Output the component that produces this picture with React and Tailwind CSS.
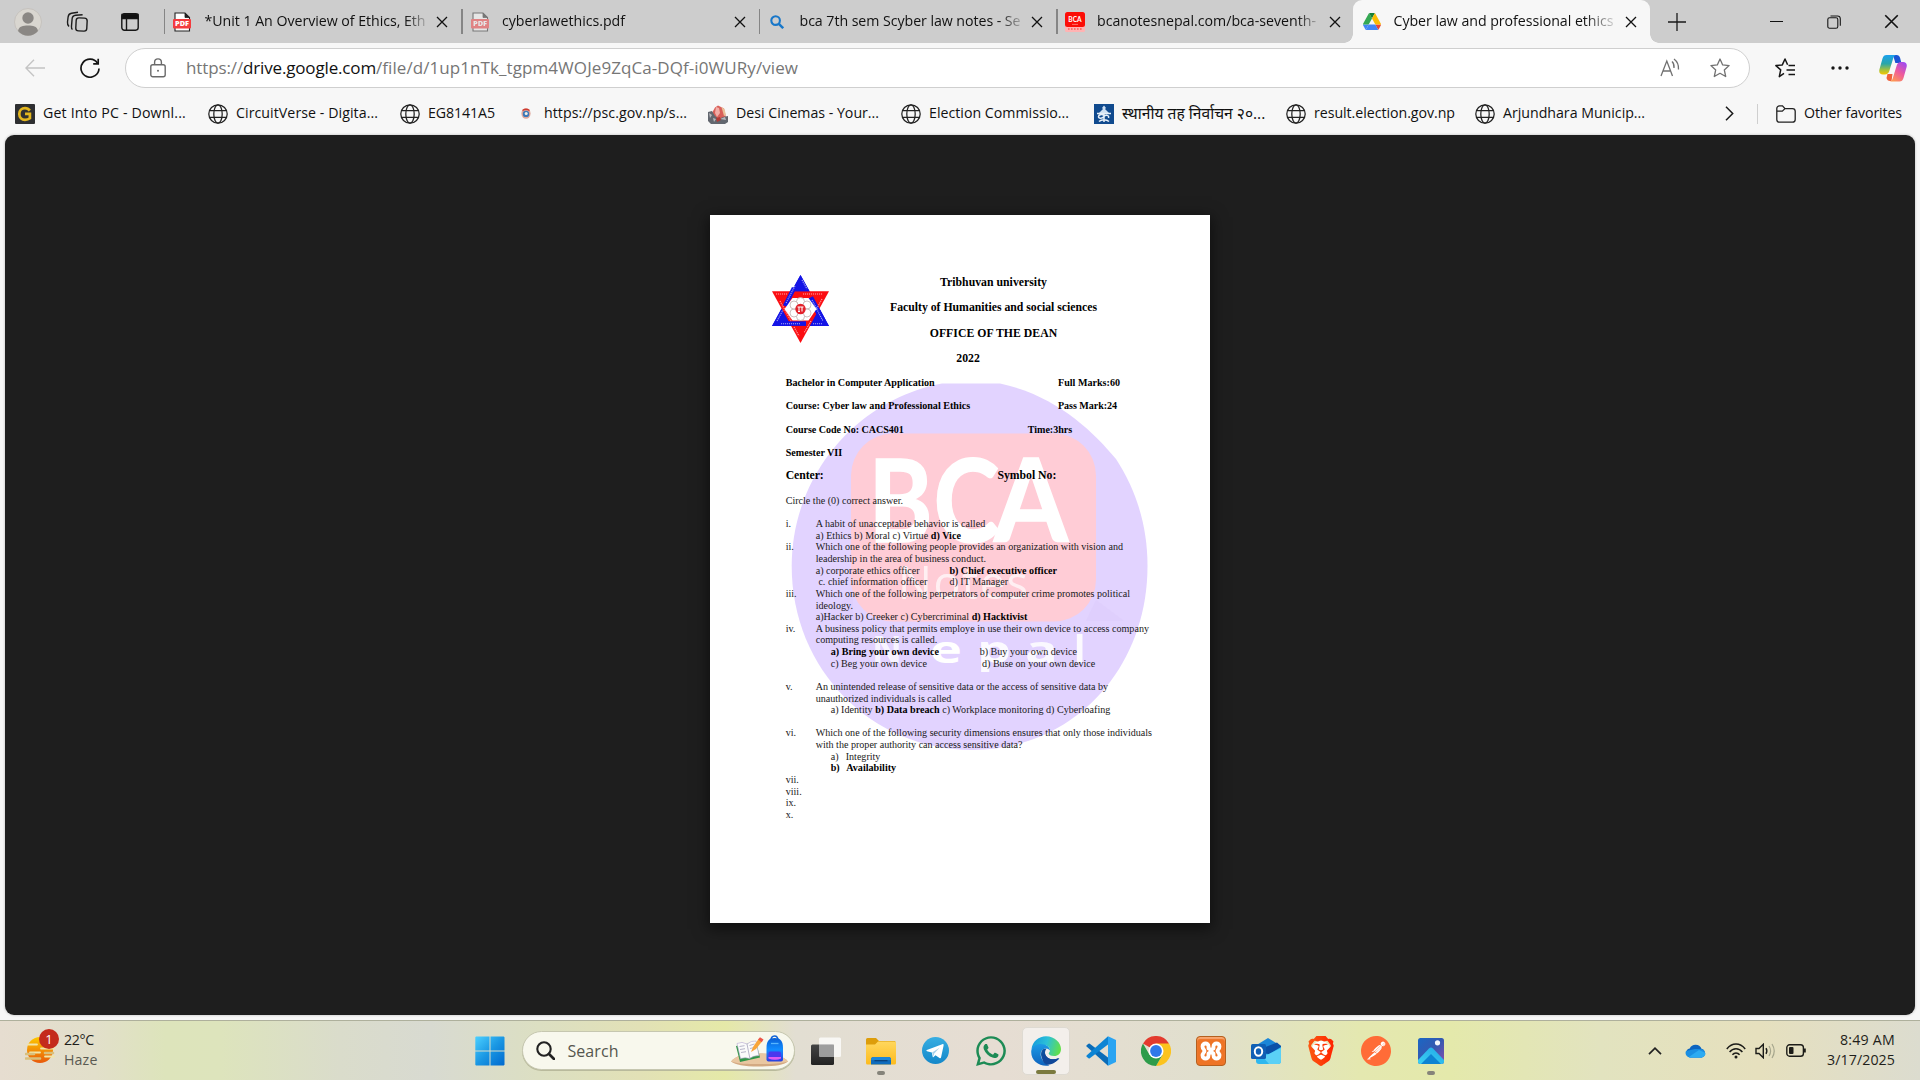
import React, { useLayoutEffect, useRef } from "react";
import { FaWhatsapp } from "react-icons/fa";
import { SiBrave, SiPostman } from "react-icons/si";

/* One line of text whose tracking is adjusted so that it fills a given width. */
function Fit({ w, className = "", children }) {
  const ref = useRef(null);
  useLayoutEffect(() => {
    const el = ref.current;
    const run = () => {
      el.style.letterSpacing = "0px";
      const natural = el.getBoundingClientRect().width;
      const n = el.textContent.length;
      if (w && n) el.style.letterSpacing = `${(w - natural) / n}px`;
    };
    run();
    document.fonts.ready.then(run);
  }, [w]);
  return (
    <span ref={ref} className={`inline-block whitespace-pre ${className}`}>
      {children}
    </span>
  );
}

/* ---------- small icons ---------- */
const Close = ({ className = "size-3" }) => (
  <svg viewBox="0 0 12 12" className={className} fill="none" stroke="#111" strokeWidth="1.3">
    <path d="M1 1l10 10M11 1L1 11" />
  </svg>
);

const Pdf = ({ faded }) => (
  <svg viewBox="0 0 18 20" className={faded ? "h-5 w-[18px] opacity-50" : "h-5 w-[18px]"}>
    <path d="M2 1h10l4.500 4.500V19H2z" fill="#fff" stroke="#222" strokeWidth="1.1" />
    <path d="M12 1v4.500h4.500z" fill="#222" stroke="#222" strokeWidth=".8" />
    <rect x="0" y="7" width="18" height="9.5" rx="1" fill="#f43b3e" />
    <text x="9" y="14.4" textAnchor="middle" fontSize="7" fontWeight="800" fontFamily="Open Sans, sans-serif" fill="#fff" textLength="14" lengthAdjust="spacingAndGlyphs">PDF</text>
  </svg>
);

const BingSearch = () => (
  <svg viewBox="0 0 14 14" className="size-3.5" fill="none" stroke="#1877c9" strokeWidth="2.1">
    <circle cx="5.6" cy="5.6" r="4.3" />
    <path d="M8.800 8.800l4.400 4.400" strokeWidth="2.4" />
  </svg>
);

const BcaIcon = () => (
  <svg viewBox="0 0 20 20" className="size-5">
    <rect width="20" height="20" rx="1.5" fill="#ffb3b3" />
    <rect width="20" height="15" rx="2.5" fill="#fb0d06" />
    <text x="10" y="10" textAnchor="middle" fontSize="6.6" fontWeight="700" fontFamily="Lato, sans-serif" fill="#fff">BCA</text>
    <path d="M7 12.400h6" stroke="#ff8a80" strokeWidth=".8" />
    <path d="M3 17h14" stroke="#ff5d55" strokeWidth="1.4" strokeDasharray="1.6 1.4" />
  </svg>
);

const Drive = () => (
  <svg viewBox="0 0 87.3 78" className="h-[17px] w-[18px]" preserveAspectRatio="none">
    <path d="m6.6 66.85 3.85 6.65c.8 1.4 1.95 2.5 3.3 3.3l13.75-23.8h-27.5c0 1.55.4 3.1 1.2 4.5z" fill="#4285f4" />
    <path d="m43.65 25-13.75-23.8c-1.35.8-2.5 1.9-3.3 3.3l-25.4 44a9.06 9.06 0 0 0 -1.2 4.5h27.5z" fill="#34a853" />
    <path d="m73.55 76.8c1.35-.8 2.5-1.9 3.3-3.3l1.6-2.75 7.65-13.25c.8-1.4 1.2-2.95 1.2-4.5h-27.502l5.852 11.5z" fill="#ea4335" />
    <path d="m43.65 25 13.75-23.8c-1.35-.8-2.9-1.2-4.5-1.2h-18.5c-1.6 0-3.15.45-4.5 1.2z" fill="#188038" />
    <path d="m59.8 53h-32.3l-13.75 23.8c1.35.8 2.9 1.2 4.5 1.2h50.8c1.6 0 3.15-.45 4.5-1.2z" fill="#4285f4" />
    <path d="m73.4 26.5-12.7-22c-.8-1.4-1.95-2.5-3.3-3.3l-13.75 23.8 16.15 28h27.45c0-1.55-.4-3.1-1.2-4.5z" fill="#fbbc04" />
  </svg>
);

const Globe = () => (
  <svg viewBox="0 0 20 20" className="size-5" fill="none" stroke="#222" strokeWidth="1.25">
    <circle cx="10" cy="10" r="9.2" />
    <ellipse cx="10" cy="10" rx="4.2" ry="9.2" />
    <path d="M1.600 6.600h16.800M1.600 13.400h16.800" />
  </svg>
);

const GetInto = () => (
  <svg viewBox="0 0 20 20" className="size-5">
    <rect width="20" height="20" rx="1" fill="#2e2f31" />
    <path d="M14.800 6.600C13.600 4.900 11.900 4.200 10 4.200C6.800 4.200 4.300 6.500 4.300 10s2.500 5.800 5.700 5.800c1.900 0 3.600-.5 4.900-1.500V9.800H10" fill="none" stroke="#e3b61f" strokeWidth="2.7" />
  </svg>
);

const Psc = () => (
  <span className="flex size-5 items-center justify-center">
    <svg viewBox="0 0 10 11" className="h-[11px] w-2.5">
      <ellipse cx="5" cy="5.5" rx="4.6" ry="5.2" fill="#e0a79b" />
      <circle cx="5" cy="5.9" r="3.2" fill="#3d79b8" />
      <circle cx="5.2" cy="5.4" r="1.5" fill="#f3efe6" />
      <path d="M1.500 2.500Q5 0 8.500 2.500" stroke="#cf3b30" strokeWidth="1.4" fill="none" />
    </svg>
  </span>
);

const Desi = () => (
  <svg viewBox="0 0 20 20" className="size-5">
    <path d="M4 9L7 3.500l3-2 2 1 4 2 2 9.500-3 2H6z" fill="#d9605a" />
    <path d="M8 3l3 1 1 5-3 4-2-4z" fill="#f2aca6" />
    <path d="M13.500 3l3 2 1.500 6-2 1z" fill="#e9c29a" />
    <path d="M0 8l4-1 3 5 4 3 4-2 5-1v6l-3 2H3l-3-3z" fill="#62676f" />
    <path d="M1 9l3 2-2 3zM12 15l5-2 1 3zM5 14l3 1-2 3z" fill="#b9b9bd" />
    <path d="M8 14l4-1 1 3-4 2z" fill="#b13a36" />
  </svg>
);

const Nepali = () => (
  <svg viewBox="0 0 20 20" className="size-5">
    <rect width="20" height="20" fill="#104a8e" />
    <path d="M10 1.500l2 2.500-1 1 4 4H5l4-4-1-1z" fill="#cfe0f2" />
    <path d="M3 9.500h14M10 9v9M10 11.500c-2-1.500-5.500-1-5.500 1s3.500 2.500 5.500 0c1.500-2 5.500-1.500 4.500 1.500M5 17.500c2.500-2.500 7.500-2.500 10 0" fill="none" stroke="#e6eff8" strokeWidth="1.5" />
  </svg>
);

/* ---------- browser chrome ---------- */
function Tab({ icon, title, w, iconPad }) {
  return (
    <div className="flex h-[43px] w-[297.5px] shrink-0 items-center">
      <div className="h-[25px] w-[1.5px] bg-[#858585]" />
      <div className={`flex w-[39.5px] ${iconPad}`}>{icon}</div>
      <div className="-mt-px w-[221px] text-[14.2px] leading-5 [mask-image:linear-gradient(to_right,#000_200px,transparent_226px)]">
        <Fit w={w}>{title}</Fit>
      </div>
      <div className="flex grow justify-end pr-[13px]">
        <Close />
      </div>
    </div>
  );
}

function TabStrip() {
  return (
    <div className="flex h-[43px] bg-[#cdcdcd]">
      <div className="flex w-[163.5px] shrink-0 items-center pl-3.5">
        <svg viewBox="0 0 28 28" className="size-7">
          <circle cx="14" cy="14" r="13.5" fill="#d9d6d0" stroke="#c1beb9" strokeWidth=".8" />
          <circle cx="14" cy="10" r="5.7" fill="#8a8784" />
          <path d="M4 23c1-5 5-5.500 10-5.500s9 .5 10 5.500a13 13 0 0 1-20 0z" fill="#8a8784" />
        </svg>
        <svg viewBox="0 0 22 22" className="ml-6 size-[22px]" fill="none" stroke="#1c1c1c" strokeWidth="1.4">
          <rect x="10" y="7" width="11" height="13" rx="2.8" transform="rotate(3 15 13)" />
          <path d="M6.500 18.500C5 17.500 5.500 16 5.500 15l.6-7c.2-2.500 1.200-3.600 3.500-3.800l7-.5" />
          <path d="M3 15.500C1.500 14 1.300 13 1.500 11l.6-5C2.400 3.500 3.500 2.500 5.500 2.200L12 1.200" />
        </svg>
        <svg viewBox="0 0 18 18" className="ml-[33px] size-[18px]" fill="none" stroke="#161616" strokeWidth="1.4">
          <rect x=".8" y=".8" width="16.4" height="16.4" rx="2.6" />
          <path d="M1 1.500h16v4H1z" fill="#111" />
          <path d="M5.500 5v12" />
        </svg>
      </div>
      <Tab icon={<Pdf />} iconPad="pl-2" w={221} title="*Unit 1 An Overview of Ethics, Eth" />
      <Tab icon={<Pdf faded />} iconPad="pl-2" w={123} title="cyberlawethics.pdf" />
      <Tab icon={<BingSearch />} iconPad="pl-2.5" w={221} title="bca 7th sem Scyber law notes - Se" />
      <Tab icon={<BcaIcon />} iconPad="pl-[7px]" w={219} title="bcanotesnepal.com/bca-seventh-" />
      <div className="relative -ml-px flex h-[43px] w-[297px] items-center rounded-t-[9px] bg-[#f7f7f7] pl-[10px]">
        <div className="absolute bottom-0 -left-[9px] size-[9px] bg-[radial-gradient(circle_at_0_0,#cdcdcd_8.5px,#f7f7f7_9px)]" />
        <div className="absolute -right-[9px] bottom-0 size-[9px] bg-[radial-gradient(circle_at_100%_0,#cdcdcd_8.5px,#f7f7f7_9px)]" />
        <div className="w-[31px]"><Drive /></div>
        <div className="-mt-px w-[221px] text-[14.2px] leading-5 [mask-image:linear-gradient(to_right,#000_190px,transparent_226px)]">
          <Fit w={220}>Cyber law and professional ethics</Fit>
        </div>
        <div className="flex grow justify-end pr-[13px]"><Close /></div>
      </div>
      <div className="flex grow items-center pl-[18px]">
        <svg viewBox="0 0 18 18" className="size-[18px]" stroke="#1a1a1a" strokeWidth="1.3"><path d="M9 0v18M0 9h18" /></svg>
        <div className="flex grow items-center justify-end pr-[21px]">
          <div className="h-px w-[13px] bg-[#111]" />
          <svg viewBox="0 0 14 14" className="ml-[44px] size-[14px]" fill="none" stroke="#161616" strokeWidth="1.1">
            <rect x=".8" y="2.8" width="10" height="10.4" rx="1.8" />
            <path d="M3.500 1h7c1.800 0 2.800 1 2.800 2.800v7" />
          </svg>
          <Close className="ml-[43px] size-[15px]" />
        </div>
      </div>
    </div>
  );
}

function Toolbar() {
  return (
    <div className="flex h-[49px] items-center bg-[#f7f7f7] pl-[25px]">
      <svg viewBox="0 0 20 18" className="h-[18px] w-5" fill="none" stroke="#c4c4c4" strokeWidth="1.4"><path d="M9 .8L.9 9 9 17.200M1 9h19" /></svg>
      <svg viewBox="0 0 20 20" className="ml-[35px] size-5" fill="none" stroke="#141414" strokeWidth="1.7">
        <path d="M17.500 5.200A9 9 0 1 0 19 10.500" /><path d="M18.200.8v5h-5" />
      </svg>
      <div className="ml-[25px] flex h-[40px] w-[1625px] items-center rounded-full border border-[#cfcfcf] bg-white pl-6">
        <svg viewBox="0 0 16 20" className="h-5 w-4" fill="none" stroke="#6a6a6a" strokeWidth="1.4">
          <rect x=".8" y="6.8" width="14.4" height="12" rx="2" />
          <path d="M4.600 6.500V4.300a3.400 3.400 0 0 1 6.800 0v2.200" /><circle cx="8" cy="12.8" r="1" fill="#6a6a6a" stroke="none" />
        </svg>
        <div className="ml-[20px] text-[17px] leading-[24px] text-[#767676]">
          <Fit w={57}>https://</Fit>
          <Fit w={133} className="text-[#111]">drive.google.com</Fit>
          <Fit w={422}>/file/d/1up1nTk_tgpm4WOJe9ZqCa-DQf-i0WURy/view</Fit>
        </div>
        <svg viewBox="0 0 20 20" className="ml-auto size-5" fill="none" stroke="#717171" strokeWidth="1.3">
          <path d="M1 18L6.800 3l5.700 15M3 13h7.600M12 3.500c1.800 1.600 2.300 3.800 2 6.500M14 1c3.500 2.600 4.800 6 4.500 10.500" />
        </svg>
        <svg viewBox="0 0 20 20" className="mr-[19.5px] ml-[29.5px] size-5" fill="none" stroke="#717171" strokeWidth="1.3" strokeLinejoin="round">
          <path d="M10 1l2.700 5.900 6.400.7-4.800 4.300 1.400 6.600L10 15.300l-5.700 3.200 1.400-6.600L.9 7.600l6.400-.7z" />
        </svg>
      </div>
      <svg viewBox="0 0 20 20" className="ml-[25px] size-5" fill="none" stroke="#161616" strokeWidth="1.5" strokeLinejoin="round">
        <path d="M9 15.400L4.300 18.600l1.400-6.700L.9 7.600l6.400-.7L10 1l2.600 5.700M13.500 7.500H20M11.500 12H20M13.500 16.500H20" />
      </svg>
      <svg viewBox="0 0 18 4" className="ml-[36px] h-1 w-[18px]" fill="#161616"><circle cx="2" cy="2" r="1.7" /><circle cx="9" cy="2" r="1.7" /><circle cx="16" cy="2" r="1.7" /></svg>
      <svg viewBox="0 0 28 28" className="ml-[30px] size-7">
        <defs>
          <linearGradient id="cpA" x1="0" y1="0" x2="0" y2="1"><stop offset="0" stopColor="#1aa0ee" /><stop offset=".45" stopColor="#2aa6a8" /><stop offset=".75" stopColor="#a0c040" /><stop offset="1" stopColor="#f5c800" /></linearGradient>
          <linearGradient id="cpB" x1="0.8" y1="0" x2="0.2" y2="1"><stop offset="0" stopColor="#a04af0" /><stop offset=".5" stopColor="#ee5a9c" /><stop offset="1" stopColor="#ff9a50" /></linearGradient>
        </defs>
        <path d="M14 1h3.500c2 0 3 1 3.600 3l1.300 5h-6z" fill="#1b54d4" />
        <path d="M8.500 20h5l-1 7H11c-2 0-3-1-3.500-3z" fill="#f0603a" />
        <path d="M7.500 1H17c-1.500.5-2.200 1.500-2.700 3l-4 13c-.7 2.300-2 3.500-4.500 3.500H4c-3 0-4.300-2-3.600-5L3.500 4.500C4.200 2 5.500 1 7.500 1z" fill="url(#cpA)" />
        <path d="M20.500 27.500H11c1.500-.5 2.200-1.500 2.700-3l4-13C18.400 9.200 19.700 8 22.200 8H24c3 0 4.300 2 3.600 5l-3.100 11c-.7 2.500-2 3.500-4 3.500z" fill="url(#cpB)" />
      </svg>
    </div>
  );
}

const bookmarks = [
  [<GetInto />, "Get Into PC - Downl...", 143, "w-[193px]"],
  [<Globe />, "CircuitVerse - Digita...", 142, "w-[192px]"],
  [<Globe />, "EG8141A5", 67, "w-[116px]"],
  [<Psc />, "https://psc.gov.np/s...", 143, "w-[192px]"],
  [<Desi />, "Desi Cinemas - Your...", 143, "w-[193px]"],
  [<Globe />, "Election Commissio...", 140, "w-[193px]"],
  [<Nepali />, "स्थानीय तह निर्वाचन २०...", 0, "w-[192px] text-[15.6px]"],
  [<Globe />, "result.election.gov.np", 141, "w-[189px]"],
  [<Globe />, "Arjundhara Municip...", 142, "w-[193px]"],
];

function BookmarkBar() {
  return (
    <div className="flex h-[43px] items-center bg-[#f7f7f7] pl-[15px] text-[14.2px] leading-5 text-[#111]">
      {bookmarks.map(([icon, label, w, cls]) => (
        <div key={label} className={`flex shrink-0 items-center gap-2 ${cls}`}>
          {icon}
          <Fit w={w} className="-mt-[2px]">{label}</Fit>
        </div>
      ))}
      <svg viewBox="0 0 9 15" className="ml-[57px] h-[15px] w-[9px]" fill="none" stroke="#1a1a1a" strokeWidth="1.5"><path d="M1 .8l6.700 6.700L1 14.200" /></svg>
      <div className="ml-[23px] h-5 w-px bg-[#cfcfcf]" />
      <svg viewBox="0 0 20 18" className="ml-[18px] h-[18px] w-5" fill="none" stroke="#222" strokeWidth="1.3">
        <path d="M.8 14.500v-11A2.700 2.700 0 0 1 3.500.8h3L9 3.600h7.500a2.700 2.700 0 0 1 2.700 2.700v8.200a2.700 2.700 0 0 1-2.700 2.700h-13A2.700 2.700 0 0 1 .8 14.500zM.8 6.200h5.500L9 3.600" />
      </svg>
      <Fit w={98} className="-mt-[2px] ml-2">Other favorites</Fit>
    </div>
  );
}

/* ---------- document ---------- */
function Emblem() {
  return (
    <svg viewBox="0 0 57 68" className="h-[68px] w-[57px]">
      <path d="M28.500 0L57 51H0z" fill="#1414e6" />
      <path d="M0 16.300h57L28.500 68z" fill="#fb0d12" />
      <path d="M28.500 0L37.500 16.300H19.500zM0 51L9.500 33.500 19 51zM57 51L47.500 33.500 38 51z" fill="#1414e6" />
      <path d="M22 13L13 31" stroke="#1414e6" strokeWidth="4.5" />
      <path d="M38.500 22.500L51 46" stroke="#1414e6" strokeWidth="5.5" />
      <path d="M10 48.600h24" stroke="#1414e6" strokeWidth="4.6" />
      <path d="M20.500 23h16l8 11-8 11.500h-16L12.500 34z" fill="#fff" />
      <g fill="#fff" stroke="#b9a3a3" strokeWidth=".7">
        <circle cx="28.500" cy="26.500" r="4" /><circle cx="35" cy="30" r="4" /><circle cx="35" cy="38" r="4" />
        <circle cx="28.500" cy="41.500" r="4" /><circle cx="22" cy="38" r="4" /><circle cx="22" cy="30" r="4" />
      </g>
      <circle cx="28.500" cy="34" r="5.2" fill="#e3202a" />
      <path d="M25.500 32h6M27 32v4M30 32v4.500M26 36.500h2" stroke="#fff" strokeWidth="1.1" fill="none" />
      <g stroke="#fff" strokeWidth="1.1" strokeDasharray="1.100 .9" opacity=".65" fill="none">
        <path d="M4 19h12M31 19h20M9 48.700h19M41 48.700h9" />
        <path d="M30 5l5 9M23 11l-9 17M40 25l11 21M5 46l6-11M8 26l11 20M50 24l-6 11M39 46l-7 12M22 52l5 9" />
      </g>
    </svg>
  );
}

function Watermark() {
  return (
    <svg viewBox="0 0 500 708" className="absolute inset-0 h-full w-full" fontFamily="Open Sans, sans-serif">
      <path d="M232 168.500h58C345 180 382 215 406 244C426 275 437.500 310 437.500 351C437.500 455 362 535 262 535S81.700 455 81.700 351C81.700 262 145 185 232 168.500z" fill="#e2d3ff" />
      <rect x="141" y="218.500" width="245" height="188" rx="42" fill="#ffccd6" />
      <path d="M107 406l36-29v21q4 8 8 8zM386 385l28 21h-38z" fill="#dccbfb" opacity=".5" />
      <g fill="#fff" fontFamily="Lato, sans-serif" fontWeight="700" fontSize="114" stroke="#fff" strokeWidth="1.500">
        <text x="158.500" y="326.500" textLength="64" lengthAdjust="spacingAndGlyphs">B</text>
        <text x="223.500" y="326.500" textLength="66" lengthAdjust="spacingAndGlyphs">C</text>
        <text x="284" y="326.500" textLength="74" lengthAdjust="spacingAndGlyphs">A</text>
      </g>
      <text x="188" y="384" fontSize="45" textLength="130" fill="#fff" opacity=".7">Notes</text>
      <g fill="#fff" fontSize="37" fontWeight="700">
        <text x="162" y="447.500" textLength="30" lengthAdjust="spacingAndGlyphs" opacity=".75">N</text>
        <text x="220" y="447.500" textLength="32" lengthAdjust="spacingAndGlyphs">e</text>
        <text x="267" y="447.500" textLength="34" lengthAdjust="spacingAndGlyphs" opacity=".9">p</text>
        <text x="315" y="447.500" textLength="33" lengthAdjust="spacingAndGlyphs" opacity=".85">a</text>
        <text x="364" y="447.500" opacity=".9">l</text>
      </g>
    </svg>
  );
}

const B = ({ children }) => <b className="font-bold text-black">{children}</b>;

/* [numeral, first part, width, left indent, second part, width, first column] */
const lines = [
  ["i.", "A habit of unacceptable behavior is called", 169.5],
  ["", <>a) Ethics b) Moral c) Virtue <B>d) Vice</B></>, 145.3],
  ["ii.", "Which one of the following people provides an organization with vision and", 307.3],
  ["", "leadership in the area of business conduct.", 170.3],
  ["", "a) corporate ethics officer", 104, "pl-[30px]", <B>b) Chief executive officer</B>, 107.7, "w-[133.7px]"],
  ["", "c. chief information officer", 109, "pl-[32.7px]", "d) IT Manager", 58.7, "w-[131px]"],
  ["iii.", "Which one of the following perpetrators of computer crime promotes political", 314.3],
  ["", "ideology.", 37.3],
  ["", <>a)Hacker b) Creeker c) Cybercriminal <B>d) Hacktivist</B></>, 211.7],
  ["iv.", "A business policy that permits employe in use their own device to access company", 333.3],
  ["", "computing resources is called.", 121.7],
  ["", <B>a) Bring your own device</B>, 108.3, "pl-[45px]", "b) Buy your own device", 97.3, "w-[149px]"],
  ["", "c) Beg your own device", 96.3, "pl-[45px]", "d) Buse on your own device", 113.3, "w-[151.3px]"],
  null,
  ["v.", "An unintended release of sensitive data or the access of sensitive data by", 292.3],
  ["", "unauthorized individuals is called", 135.7],
  ["", <>a) Identity <B>b) Data breach</B> c) Workplace monitoring d) Cyberloafing</>, 279.7, "pl-[45px]"],
  null,
  ["vi.", "Which one of the following security dimensions ensures that only those individuals", 336.3],
  ["", "with the proper authority can access sensitive data?", 206.7],
  ["", "a)", 8, "pl-[45px]", "Integrity", 34.7, "w-[15px]"],
  ["", <B>b)</B>, 9, "pl-[45px]", <B>Availability</B>, 50, "w-[15.5px]"],
  ["vii."],
  ["viii."],
  ["ix."],
  ["x."],
];

function Line({ row }) {
  if (!row) return <div className="h-[11.63px]" />;
  const [num, a, wa, indent, b, wb, col] = row;
  return (
    <div className={`flex h-[11.63px] leading-[11.63px] ${num ? "" : indent || "pl-[30px]"}`}>
      {num && <div className="w-[30px]">{num}</div>}
      {a && <div className={`shrink-0 ${col || ""}`}><Fit w={wa}>{a}</Fit></div>}
      {b && <Fit w={wb}>{b}</Fit>}
    </div>
  );
}

function MetaRow({ a, wa, b, wb, col }) {
  return (
    <div className="flex h-[23.3px] leading-[23.3px]">
      <div className={`shrink-0 ${col}`}><Fit w={wa}>{a}</Fit></div>
      {b && <Fit w={wb}>{b}</Fit>}
    </div>
  );
}

function DocPage() {
  return (
    <div className="relative h-[708px] w-[500px] bg-white font-['Liberation_Serif',serif] text-[10.08px] text-[#1a1a1a] shadow-[0_4px_14px_2px_rgba(0,0,0,0.5)]">
      <Watermark />
      <div className="relative pt-[55px]">
        <div className="flex pl-[62px] text-[11.76px] font-bold text-black">
          <div className="w-[57.5px] shrink-0 pt-[4.5px]"><Emblem /></div>
          <div className="flex w-[328px] shrink-0 flex-col items-center leading-[25.3px]">
            <Fit w={107}>Tribhuvan university</Fit>
            <Fit w={207}>Faculty of Humanities and social sciences</Fit>
            <Fit w={127.5}>OFFICE OF THE DEAN</Fit>
            <Fit w={23.5} className="mr-[51px]">2022</Fit>
          </div>
        </div>
        <div className="pl-[75.7px]">
          <div className="font-bold text-black">
            <MetaRow a="Bachelor in Computer Application" wa={149} b="Full Marks:60" wb={62} col="w-[272.3px]" />
            <MetaRow a="Course: Cyber law and Professional Ethics" wa={184.5} b="Pass Mark:24" wb={59} col="w-[272.3px]" />
            <MetaRow a="Course Code No: CACS401" wa={118} b="Time:3hrs" wb={44.5} col="w-[242px]" />
            <MetaRow a="Semester VII" wa={56.5} col="w-[242px]" />
            <div className="flex h-6 text-[11.76px] leading-6">
              <div className="w-[211.7px]"><Fit w={38}>Center:</Fit></div>
              <Fit w={59}>Symbol No:</Fit>
            </div>
          </div>
          <div className="mb-[4.6px] h-[25.2px] leading-[25.2px]"><Fit w={117.3}>Circle the (0) correct answer.</Fit></div>
          {lines.map((row, i) => <Line key={i} row={row} />)}
        </div>
      </div>
    </div>
  );
}

/* ---------- taskbar ---------- */
const Weather = () => (
  <div className="relative h-[30px] w-[30px]">
    <svg viewBox="0 0 30 30" className="size-[30px]">
      <defs><linearGradient id="sun" x1="0" y1="0" x2="0" y2="1"><stop offset="0" stopColor="#fdc800" /><stop offset="1" stopColor="#e8590c" /></linearGradient></defs>
      <circle cx="15" cy="14" r="13" fill="url(#sun)" />
      <g strokeLinecap="round" strokeWidth="1.8" fill="none">
        <path d="M3 8.500h9M16 12.500h14M5 16.500h10M20 20.500h9" stroke="#f1e6a8" />
        <path d="M1 18h8M1 22.500h14M20 17h8" stroke="#d9c07c" strokeWidth="2.6" />
      </g>
    </svg>
    <div className="absolute -top-[7px] left-[14px] flex size-5 items-center justify-center rounded-full bg-[#c42b1c] text-[13px] leading-5 text-white">1</div>
  </div>
);

const Start = () => (
  <svg viewBox="0 0 30 30" className="size-[30px]">
    <defs><linearGradient id="win" x1="0" y1="0" x2="1" y2="1"><stop offset="0" stopColor="#4cd0ff" /><stop offset=".5" stopColor="#1a97e3" /><stop offset="1" stopColor="#0069cf" /></linearGradient></defs>
    <path d="M1 .5h13.500v13.900H.3V1.200zM15.500.5h13.200l.8.700v13.200h-14zM.3 15.400h14.200v14H1l-.7-.7zM15.500 15.400h14v13.300l-.8.700H15.500z" fill="url(#win)" />
  </svg>
);

const SchoolArt = () => (
  <svg viewBox="0 0 57 32" className="h-8 w-[57px]">
    <defs><linearGradient id="bag" x1="0" y1="0" x2="0" y2="1"><stop offset="0" stopColor="#0a5fd6" /><stop offset=".5" stopColor="#118dff" /><stop offset="1" stopColor="#2b3fe0" /></linearGradient></defs>
    <path d="M0 26.500C6 20 14 18.500 28 18.500s24 2 29 8C52 30 44 31.500 28 31.500S5 30 0 26.500z" fill="#d3a982" />
    <path d="M0 26.500C6 20 14 18.500 28 18.500s24 2 29 8C48 29 40 29 28 29S8 29 0 26.500z" fill="#e9c7a1" />
    <path d="M5 11l20-4 4 15.500L9 27z" fill="#2f9547" />
    <path d="M6 8.500q5-2.500 10 .5 4-3.500 9-3l3 14.500q-6 .2-9.500 3-4-1.500-9 0z" fill="#fafafa" stroke="#b6a8cf" strokeWidth=".6" />
    <path d="M16 9l2.800 14M8.500 11.500l5-.8M9 14.500l5-.8M10 17.500l5-.8M18.500 10.500l5-1.500M19 13.500l5-1.200" stroke="#8a86a8" strokeWidth=".6" />
    <path d="M20 17l2-5 5.500-8 3.500 2.600L25 14z" fill="#f9a53a" /><path d="M27 4.500l2-2.300 3.500 2.400-1.700 2.600z" fill="#ec5548" />
    <path d="M40 6q0-5 3.500-5T47 6" fill="none" stroke="#1264d8" strokeWidth="1.600" />
    <path d="M35.500 13C35.500 6 38 3 43.700 3S52 6 52 13v11.500q0 2-2 2H37.500q-2 0-2-2z" fill="url(#bag)" />
    <rect x="37.500" y="16.500" width="12.500" height="8.500" rx="2" fill="#4a38ee" /><path d="M37.500 22h12.500v1.500q-6 2.500-12.500 0z" fill="#e05cf0" />
    <path d="M40 8.500h7.500" stroke="#57b6ff" strokeWidth="1.300" />
  </svg>
);

const TaskView = () => (
  <svg viewBox="0 0 30 30" className="size-[30px]">
    <defs><linearGradient id="tvd" x1="0" y1="0" x2="0" y2="1"><stop offset="0" stopColor="#444" /><stop offset="1" stopColor="#222" /></linearGradient></defs>
    <rect x="0" y="8.500" width="23" height="20.500" rx="1.5" fill="url(#tvd)" />
    <rect x="8" y="1.500" width="22" height="19.500" rx="1.5" fill="#fff" opacity=".75" />
    <rect x="8" y="8.500" width="15" height="12.500" fill="#777" opacity=".55" />
  </svg>
);

const Explorer = () => (
  <svg viewBox="0 0 30 30" className="size-[30px]">
    <defs><linearGradient id="fld" x1="0" y1="0" x2="0" y2="1"><stop offset="0" stopColor="#ffd75e" /><stop offset="1" stopColor="#fdbb1d" /></linearGradient></defs>
    <path d="M0 3.500Q0 2 1.500 2H10l3 3h15.500q1 0 1 1.200V12H0z" fill="#dd9d0a" />
    <path d="M0 8.500h9l3-3h16.500q1.500 0 1.500 1.500v20q0 1.500-1.500 1.500H1.500Q0 28.500 0 27z" fill="url(#fld)" />
    <path d="M5 28.500v-5Q5 21 7.500 21h15q2.500 0 2.500 2.500v5z" fill="#0f6cbd" /><path d="M5 24v-.5Q5 21 7.500 21h15q2.500 0 2.500 2.500v.5z" fill="#1d86d6" />
    <path d="M8.500 24.700h13" stroke="#0a3f78" strokeWidth="1.2" />
  </svg>
);

const Telegram = () => (
  <svg viewBox="0 0 28 28" className="size-[27px]">
    <defs><linearGradient id="tg" x1="0" y1="0" x2="0" y2="1"><stop offset="0" stopColor="#37aee2" /><stop offset="1" stopColor="#1487c9" /></linearGradient></defs>
    <circle cx="14" cy="14" r="14" fill="url(#tg)" />
    <path d="M5 13.600L21 7.400c1-.3 1.600.2 1.400 1.400l-2.600 12.300c-.2 1-.9 1.200-1.700.7L14 18.800l-2 1.900c-.4.400-.8.300-.9-.3l-.9-4.200-5-1.500c-.9-.3-.9-.8-.2-1.100z" fill="#fff" />
    <path d="M10.500 16.200L18.500 11l-6 6.300-.5 3z" fill="#a9d2ea" />
  </svg>
);

const Edge = () => (
  <svg viewBox="0 0 30 30" className="size-[30px]">
    <defs>
      <linearGradient id="eg1" x1="0" y1=".3" x2="1" y2=".5"><stop offset="0" stopColor="#159bdc" /><stop offset=".5" stopColor="#2cc0d8" /><stop offset="1" stopColor="#62e04a" /></linearGradient>
      <linearGradient id="eg2" x1="0" y1="0" x2="0" y2="1"><stop offset="0" stopColor="#1c9be6" /><stop offset="1" stopColor="#0f62bd" /></linearGradient>
    </defs>
    <path d="M.5 13C1.500 5 8 .2 15 .2 24 .2 30 7 30 13c0 4.500-3 7-6.800 7-3.700 0-5.500-1.500-5.500-2.500 0-.7 1.300-1.300 1.300-3.500 0-3-3-5-7-5C7 9 2.500 11 .5 13z" fill="url(#eg1)" />
    <path d="M.3 14.500C1 10.500 5.500 8 9.500 8c6 0 9.500 3 9.500 6.500 0 0-2-2.500-5-2-3.500.6-5 4-4 8 1 4.500 4 7.500 8.500 9C9 31.500-.8 25 .3 14.500z" fill="url(#eg2)" />
    <path d="M12.500 13C9 15.500 9.500 21 12.500 24.500c3.500 4 10 4.300 15.500-1.500.5-.6 0-1-.6-.7-5.500 2.500-12.900.3-13.400-5-.1-1.800.5-3.300 1.500-4.800z" fill="#0d4f9e" />
    <path d="M14 17.300c.5 5.300 7.900 7.500 13.400 5-3.400 5.400-8.400 7.200-12.400 6.200C10.500 26 10 20 14 17.300z" fill="#11489a" />
  </svg>
);

const VsCode = () => (
  <svg viewBox="0 0 30 30" className="size-[30px]">
    <path d="M22 .3L30 4v22l-8 3.700z" fill="#2aa4f2" />
    <path d="M22 29.700L.6 10.500q-.5-.6 0-1.200L2.500 7.800q.7-.4 1.300 0L22 21.500z" fill="#0a6cb8" />
    <path d="M22 .3L.6 19.500q-.5.6 0 1.200l1.900 1.500q.7.4 1.300 0L22 8.500z" fill="#0c84d4" />
  </svg>
);

const Chrome = () => (
  <svg viewBox="0 0 30 30" className="size-[30px]">
    <path d="M15 15L2 7.500A15 15 0 0 1 28 7.500z" fill="#e33b2e" />
    <path d="M15 7.500H28A15 15 0 0 1 15 30l6.500-11.300z" fill="#fcc31e" />
    <path d="M8.500 18.700L2 7.500A15 15 0 0 0 15 30l6.500-11.300z" fill="#2d9c4a" />
    <circle cx="15" cy="15" r="7.5" fill="#fff" /><circle cx="15" cy="15" r="5.9" fill="#3079ea" />
  </svg>
);

const Xampp = () => (
  <div className="flex size-[30px] items-center justify-center rounded-[4px] border border-[#b5601f] bg-[#ee7426] shadow-[inset_0_2px_1px_#f8a670]">
    <svg viewBox="0 0 22 20" className="h-5 w-[22px]" fill="none" stroke="#fff" strokeWidth="3.8" strokeLinecap="round" strokeLinejoin="round">
      <path d="M8.500 5.500C8.500 3.500 7 2.500 5.500 2.500S2.500 3.500 2.500 5.500C2.500 8 4.500 8.500 4.500 10s-2 2-2 4.500c0 2 1.500 3 3 3s3-1 3-3M13.500 5.500c0-2 1.500-3 3-3s3 1 3 3c0 2.500-2 3-2 4.500s2 2 2 4.500c0 2-1.500 3-3 3s-3-1-3-3M8.500 5.500v2q2.500 2 5 0v-2M8.500 14.500v-2q2.500-2 5 0v2" />
    </svg>
  </div>
);

const Outlook = () => (
  <svg viewBox="0 0 30 30" className="size-[30px]">
    <path d="M4 10L17 2l13 8v6H4z" fill="#1b86d8" />
    <path d="M9 13L26 6.500l4 3.500v3L14 23z" fill="#0a50a8" />
    <path d="M5 17l13 1 12-7v14q0 3-3 3H8q-3 0-3-3z" fill="#2fb7ee" />
    <path d="M30 12v13q0 3-3 3h-9l-6-7z" fill="#5bd0f6" />
    <rect x="0" y="8" width="15" height="15" rx="1.5" fill="#0f5fb5" />
    <ellipse cx="7.5" cy="15.5" rx="3.7" ry="4.2" fill="none" stroke="#fff" strokeWidth="2" />
  </svg>
);

const Brave = () => (
  <div className="flex h-[30px] w-[26px] items-center justify-center bg-[radial-gradient(circle_at_50%_48%,#fff_9px,transparent_10px)]">
    <svg width="0" height="0" className="absolute"><defs><linearGradient id="brv" x1="0" x2="1"><stop offset="0" stopColor="#fb5a12" /><stop offset="1" stopColor="#ff2300" /></linearGradient></defs></svg>
    <SiBrave className="size-[30px] shrink-0 fill-[url(#brv)]" />
  </div>
);

const Postman = () => (
  <div className="flex size-[30px] items-center justify-center bg-[radial-gradient(circle,#fff_12px,transparent_13px)]">
    <SiPostman className="size-[30px] text-[#ff6c37]" />
  </div>
);

const Photos = () => (
  <svg viewBox="0 0 26 26" className="size-[26px]">
    <defs>
      <linearGradient id="ph" x1="0" y1="0" x2="1" y2="1"><stop offset="0" stopColor="#1a67c4" /><stop offset=".5" stopColor="#3558b0" /><stop offset="1" stopColor="#8a4fae" /></linearGradient>
      <linearGradient id="ph2" x1="1" y1="0" x2="0" y2="1"><stop offset="0" stopColor="#20a6e6" /><stop offset="1" stopColor="#3fd4f4" /></linearGradient>
      <clipPath id="phc"><rect width="26" height="26" rx="2.5" /></clipPath>
    </defs>
    <g clipPath="url(#phc)">
      <rect width="26" height="26" fill="url(#ph)" />
      <path d="M-2 24L11 10.500q2-2 4 0L29 25v3H-2z" fill="url(#ph2)" />
      <path d="M13 16l-10 10h20z" fill="#0e83d2" />
    </g>
    <circle cx="19.5" cy="4.8" r="2.6" fill="#f3f6fb" />
  </svg>
);

function AppSlot({ children, active, running }) {
  return (
    <div className="flex w-[55px] justify-center">
      <div className={`relative flex h-12 w-12 items-center justify-center rounded-[5px] ${active ? "border border-[#dedad2] bg-[#f3efeb]" : ""}`}>
        {children}
        {active && <div className="absolute bottom-0 h-1 w-5 rounded-full bg-[#7b7a3f]" />}
        {running && <div className="absolute bottom-0 h-1 w-2 rounded-full bg-[#85837a]" />}
      </div>
    </div>
  );
}

function Taskbar() {
  return (
    <div className="flex h-[60px] items-center border-t border-[#aeb09c] bg-[linear-gradient(to_right,#e6ddd0_0px,#e2dfca_95px,#dde4bb_165px,#dde4bc_220px,#dadccb_340px,#d8dad1_430px,#dcdfc2_540px,#e2e1b6_640px,#e5e9a8_725px,#e2ded2_795px,#e6ddd3_1000px,#e1dfce_1200px,#e4e8b0_1360px,#e4e9ab_1450px,#e2e3bf_1600px,#e6e0be_1760px,#dcdccf_1920px)]">
      <div className="flex w-[474.5px] items-center pl-[25px]">
        <Weather />
        <div className="-mt-[2px] ml-[9px] flex flex-col text-[14.2px] leading-5 text-[#1f1f1b]">
          <Fit w={32}>22°C</Fit>
          <Fit w={33.5} className="text-[#5a5a52]">Haze</Fit>
        </div>
      </div>
      <Start />
      <div className="ml-[17px] flex h-[39px] w-[273px] items-center rounded-full border border-[#c6c7b0] bg-[#f8f8ed] pl-[13px] shadow-[0_1px_0_#b9ba9c]">
        <svg viewBox="0 0 19 19" className="size-[19px]" fill="none" stroke="#222" strokeWidth="2.1" strokeLinecap="round"><circle cx="8" cy="8" r="6.7" /><path d="M13 13l5 5" strokeWidth="2.6" /></svg>
        <Fit w={51} className="ml-[13px] text-[16px] leading-6 text-[#55564e]">Search</Fit>
        <div className="mr-[6px] ml-auto"><SchoolArt /></div>
      </div>
      <div className="ml-[3.5px] flex">
        <AppSlot><TaskView /></AppSlot>
        <AppSlot running><Explorer /></AppSlot>
        <AppSlot><Telegram /></AppSlot>
        <AppSlot><FaWhatsapp className="size-[34px] shrink-0 text-[#1d8b55]" /></AppSlot>
        <AppSlot active><Edge /></AppSlot>
        <AppSlot><VsCode /></AppSlot>
        <AppSlot><Chrome /></AppSlot>
        <AppSlot><Xampp /></AppSlot>
        <AppSlot><Outlook /></AppSlot>
        <AppSlot><Brave /></AppSlot>
        <AppSlot><Postman /></AppSlot>
        <AppSlot running><Photos /></AppSlot>
      </div>
      <div className="ml-auto flex items-center pr-[25px]">
        <svg viewBox="0 0 14 8" className="h-2 w-3.5" fill="none" stroke="#222" strokeWidth="1.7"><path d="M1 7.200l6-6 6 6" /></svg>
        <svg viewBox="0 0 21 14" className="ml-[23px] h-3.5 w-[21px]">
          <path d="M5 13.500a4.600 4.600 0 0 1-.3-9A6.500 6.500 0 0 1 16.500 4.800 4.500 4.500 0 0 1 16.500 13.500z" fill="#0c64c0" />
          <path d="M5 13.500a4.600 4.600 0 0 1-4-6.500l9-2 7 .2A4.300 4.300 0 0 1 16.500 13.500z" fill="#1a8fe3" />
          <path d="M3.500 13.200L14 6l6.500 3a4.200 4.200 0 0 1-4 4.500H5z" fill="#2cabf2" />
        </svg>
        <svg viewBox="0 0 20 16" className="ml-5 h-4 w-5" fill="none" stroke="#1c1c18" strokeWidth="1.5">
          <path d="M.8 6C6-.6 14-.6 19.200 6M3.600 9c3.600-4.500 9.200-4.500 12.800 0M6.400 11.800c2-2.400 5.200-2.400 7.200 0" /><circle cx="10" cy="14" r="1.5" fill="#1c1c18" stroke="none" />
        </svg>
        <svg viewBox="0 0 21 16" className="ml-[9px] h-4 w-[21px]" fill="none" stroke="#1c1c18" strokeWidth="1.4">
          <path d="M1 5.500h3L8.300 1.300v13.400L4 10.500H1z" /><path d="M11 5.200q1.700 2.800 0 5.600" /><path d="M14 3q3.200 5 0 10M17 1q4.500 7 0 14" stroke="#a5a58c" strokeWidth="1.2" />
        </svg>
        <svg viewBox="0 0 21 13" className="ml-[10px] h-[13px] w-[21px]" fill="none" stroke="#1c1c18" strokeWidth="1.4">
          <rect x=".8" y=".8" width="16.6" height="11.4" rx="2.8" /><rect x="3" y="3" width="4.5" height="7" rx="1" fill="#1c1c18" stroke="none" /><path d="M18.800 4.500v4" strokeWidth="2" />
        </svg>
        <div className="-mt-[2px] ml-[19px] flex w-[69px] flex-col items-end text-[14.2px] leading-5 text-[#1f1f1b]">
          <Fit w={55}>8:49 AM</Fit>
          <Fit w={68}>3/17/2025</Fit>
        </div>
      </div>
    </div>
  );
}

export default function App() {
  return (
    <div className="flex h-[1080px] w-[1920px] flex-col overflow-hidden bg-[#f7f7f7] font-['Open_Sans','Noto_Sans',sans-serif] text-[#111]">
      <TabStrip />
      <Toolbar />
      <BookmarkBar />
      <div className="mx-[5px] flex h-[880px] justify-center rounded-[9px] bg-[#1e1e1e] pt-20 shadow-[0_0_2px_1px_rgba(0,0,0,0.12)]">
        <DocPage />
      </div>
      <div className="h-[5px] shrink-0" />
      <Taskbar />
    </div>
  );
}
